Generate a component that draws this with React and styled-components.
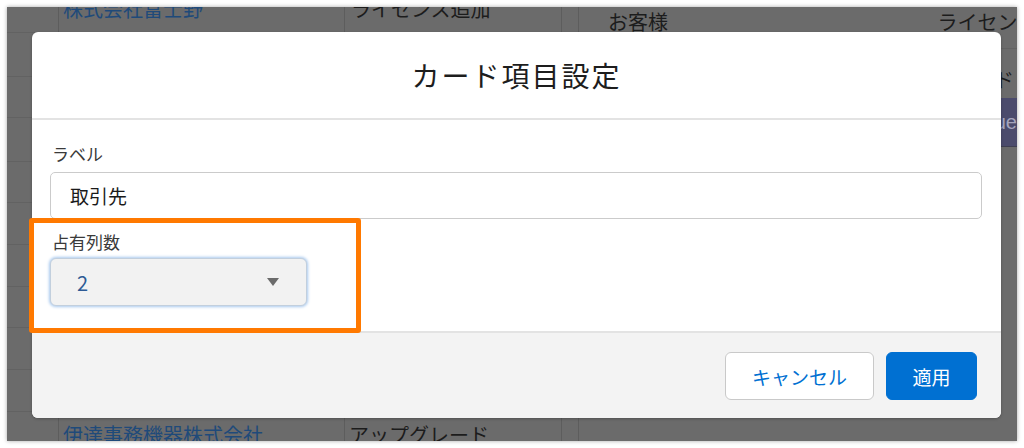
import React from "react";
import styled, { createGlobalStyle } from "styled-components";

const Global = createGlobalStyle`
  html, body { margin: 0; padding: 0; background: #ffffff; }
  body { font-family: "Noto Sans CJK JP", "Noto Sans", sans-serif; }
  * { box-sizing: border-box; }
`;

const Frame = styled.div`
  position: relative;
  margin: 7px;
  width: 1010px;
  height: 434px;
  overflow: hidden;
  background: #6b6b6b;
  box-shadow: 0 0 4px rgba(0, 0, 0, 0.35);
`;

const Backdrop = styled.div`
  display: grid;
  grid-template-columns: 52px 286px 217px 17px 1fr;
  height: 100%;
`;

const Column = styled.div`
  display: flex;
  flex-direction: column;
  justify-content: ${(p) => (p.$spread ? "space-between" : "flex-start")};
  border-right: ${(p) => (p.$line ? "1px solid #5d5d5d" : "none")};
  min-width: 0;
  overflow: hidden;
`;

const StripCell = styled.div`
  flex: none;
  height: ${(p) => p.$h}px;
  border-bottom: 1px solid #626262;
`;

const BgText = styled.div`
  font-size: 20px;
  line-height: 20px;
  white-space: nowrap;
  color: ${(p) => (p.$link ? "#1f4a7a" : "#1c1c1c")};
  padding-left: ${(p) => p.$pad || 0}px;
  margin-top: ${(p) => p.$mt || 0}px;
  margin-bottom: ${(p) => p.$mb || 0}px;
  margin-right: ${(p) => p.$mr || 0}px;
`;

const PanelHead = styled.div`
  display: flex;
  justify-content: space-between;
  height: 42px;
  border-bottom: 1px solid #626262;
  padding: 5px 0 0 29px;
`;

const PanelRow = styled.div`
  display: flex;
  justify-content: flex-end;
  height: ${(p) => p.$h}px;
  align-items: flex-start;
`;

const Glyph = styled.span`
  font-size: 20px;
  line-height: 20px;
  color: #1c1c1c;
  margin-right: 3px;
  margin-top: 21px;
`;

const PurpleButton = styled.div`
  width: 70px;
  height: 49px;
  margin-right: -20px;
  background: #4b4b6c;
  border-bottom: 1px solid #3f3f52;
  color: #a4a4bc;
  font-family: "Liberation Sans", sans-serif;
  font-size: 20px;
  line-height: 49px;
  text-align: right;
  padding-right: 20px;
  white-space: nowrap;
`;

const Modal = styled.div`
  position: absolute;
  left: 25px;
  top: 25px;
  width: 969px;
  height: 386px;
  background: #ffffff;
  border-radius: 6px;
  overflow: hidden;
  display: flex;
  flex-direction: column;
  box-shadow: 0 1px 3px rgba(0, 0, 0, 0.25);
`;

const Header = styled.div`
  flex: none;
  height: 88px;
  border-bottom: 2px solid #e3e3e3;
  display: flex;
  align-items: center;
  justify-content: center;
`;

const Title = styled.h2`
  margin: 0;
  font-size: 28px;
  font-weight: 400;
  letter-spacing: 2px;
  color: #1d1d1d;
`;

const Body = styled.div`
  flex: 1;
  padding: 24px 19px 0 18px;
  display: flex;
  flex-direction: column;
`;

const Field = styled.div`
  display: flex;
  flex-direction: column;
  margin-bottom: ${(p) => p.$mb || 0}px;
`;

const Label = styled.label`
  font-size: 17px;
  line-height: 20px;
  color: #3a3a3a;
  padding-left: 2px;
  margin-bottom: ${(p) => p.$gap}px;
`;

const TextInput = styled.div`
  height: 47px;
  border: 1px solid #cbcbcb;
  border-radius: 5px;
  padding-left: 19px;
  display: flex;
  align-items: center;
  font-size: 19px;
  color: #1a1a1a;
`;

const Select = styled.div`
  width: 257px;
  height: 48px;
  border: 1px solid #c2cfdd;
  border-radius: 6px;
  background: #f2f2f2;
  box-shadow: 0 0 3px 1px #a9c9ee;
  display: flex;
  align-items: center;
  justify-content: space-between;
  padding: 0 27px 0 26px;
  font-size: 20px;
  color: #2d5a95;
`;

const Caret = styled.svg`
  width: 12px;
  height: 8px;
  display: block;
`;

const Footer = styled.div`
  flex: none;
  height: 87px;
  border-top: 2px solid #e3e3e3;
  background: #f3f3f3;
  display: flex;
  justify-content: flex-end;
  align-items: flex-start;
  gap: 12px;
  padding: 19px 24px 0 0;
`;

const Button = styled.button`
  height: 48px;
  width: ${(p) => p.$w}px;
  border-radius: 6px;
  font-family: inherit;
  font-size: 19px;
  cursor: pointer;
  border: 1px solid ${(p) => (p.$primary ? "#0070d2" : "#c9c9c9")};
  background: ${(p) => (p.$primary ? "#0070d2" : "#ffffff")};
  color: ${(p) => (p.$primary ? "#ffffff" : "#0070d2")};
`;

const Highlight = styled.div`
  position: absolute;
  left: 22px;
  top: 211px;
  width: 332px;
  height: 115px;
  border: 5px solid #ff7900;
  border-radius: 3px;
  pointer-events: none;
`;

const stripHeights = [26, 44, 41, 44, 41, 42, 42, 41, 42, 42, 42];

export default function App() {
  return (
    <>
      <Global />
      <Frame>
        <Backdrop>
          <Column $line>
            {stripHeights.map((h, i) => (
              <StripCell key={i} $h={h} />
            ))}
          </Column>
          <Column $line $spread>
            <BgText $link $pad={4} $mt={-8}>株式会社富士野</BgText>
            <BgText $link $pad={4} $mb={-4}>伊達事務機器株式会社</BgText>
          </Column>
          <Column $line $spread>
            <BgText $pad={6} $mt={-8}>ライセンス追加</BgText>
            <BgText $pad={4} $mb={-4}>アップグレード</BgText>
          </Column>
          <Column $line />
          <Column>
            <PanelHead>
              <BgText>お客様</BgText>
              <BgText $mr={-20}>ライセンス</BgText>
            </PanelHead>
            <PanelRow $h={49}>
              <Glyph>ド</Glyph>
            </PanelRow>
            <PanelRow $h={50}>
              <PurpleButton>Value</PurpleButton>
            </PanelRow>
          </Column>
        </Backdrop>

        <Modal>
          <Header>
            <Title>カード項目設定</Title>
          </Header>
          <Body>
            <Field $mb={13}>
              <Label $gap={8}>ラベル</Label>
              <TextInput>取引先</TextInput>
            </Field>
            <Field>
              <Label $gap={6}>占有列数</Label>
              <Select>
                <span>2</span>
                <Caret viewBox="0 0 12 8">
                  <path d="M0 0 H12 L6 8 Z" fill="#6b6b6b" />
                </Caret>
              </Select>
            </Field>
          </Body>
          <Footer>
            <Button $w={149}>キャンセル</Button>
            <Button $w={91} $primary>適用</Button>
          </Footer>
        </Modal>

        <Highlight />
      </Frame>
    </>
  );
}
